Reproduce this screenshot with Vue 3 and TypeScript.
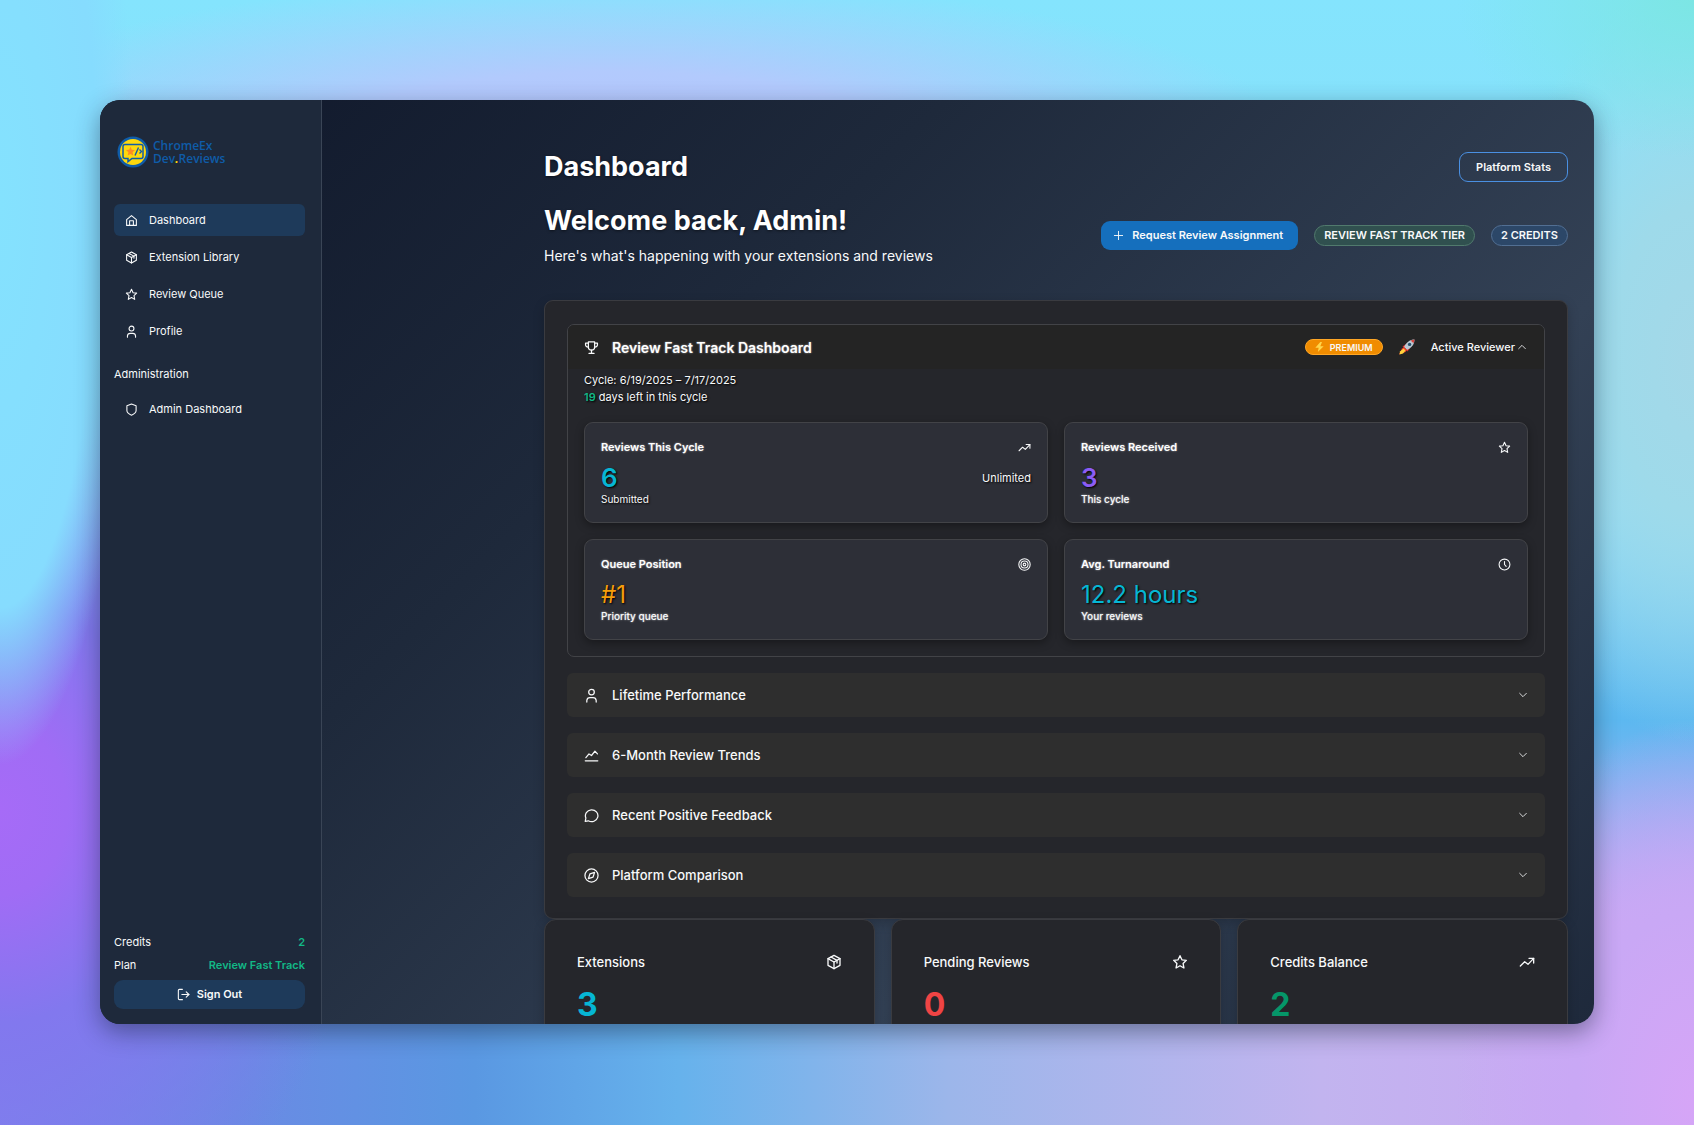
<script setup lang="ts">
import { h, ref, type FunctionalComponent } from 'vue'

type IconName =
  | 'home' | 'package' | 'star' | 'user' | 'shield' | 'logout' | 'plus' | 'trophy'
  | 'trend' | 'target' | 'clock' | 'chart' | 'message' | 'compass' | 'down' | 'up'

const shapes: Record<IconName, string[]> = {
  home: ['M3 10.500L12 3l9 7.500V21H3z', 'M8.500 21v-8.500h7V21'],
  package: ['M12 2l9 5v10l-9 5-9-5V7z', 'M3 7l9 5 9-5', 'M12 12v10', 'M7.500 4.500l9 5v4'],
  star: ['M12 2.500l2.900 6.200 6.600.8-4.900 4.700 1.300 6.800-5.900-3.400L6.100 21l1.300-6.800-4.900-4.700 6.600-.8z'],
  user: ['M12 2a4.500 4.500 0 1 0 0 9 4.500 4.500 0 0 0 0-9z', 'M4.500 22.500v-2.500a5 5 0 0 1 5-4.500h5a5 5 0 0 1 5 4.500v2.500'],
  shield: ['M12 2l8.500 3v9c0 4-3.500 6.500-8.500 8.500C7 20.500 3.500 18 3.500 14V5z'],
  logout: ['M10 2.500H4.500a2 2 0 0 0-2 2v15a2 2 0 0 0 2 2H10', 'M9 12h13', 'M17 7l5 5-5 5'],
  plus: ['M12 3v18', 'M3 12h18'],
  trophy: ['M7 3h10v8a5 5 0 0 1-10 0z', 'M12 16v5', 'M8 21.500h8', 'M7 5H2.500v2.500a4 4 0 0 0 4.500 4', 'M17 5h4.500v2.500a4 4 0 0 1-4.500 4'],
  trend: ['M2 18l6.500-6.500 5 4L22 6.500', 'M15 6.500h7v7'],
  target: ['M12 1.500a10.500 10.500 0 1 0 0 21 10.500 10.500 0 0 0 0-21z', 'M12 5.500a6.500 6.500 0 1 0 0 13 6.500 6.500 0 0 0 0-13z', 'M12 9.500a2.500 2.500 0 1 0 0 5 2.500 2.500 0 0 0 0-5z'],
  clock: ['M12 2a10 10 0 1 0 0 20 10 10 0 0 0 0-20z', 'M12 6.500V12l3 3.500'],
  chart: ['M2 20.500h20', 'M3 15.500l5-6 4 2.500 5.500-7 4 4.500'],
  message: ['M2 21.500l1-5.500a10 9.500 0 1 1 4 4.500z'],
  compass: ['M12 1.500a10.500 10.500 0 1 0 0 21 10.500 10.500 0 0 0 0-21z', 'M17 7l-2.500 7.500L7 17l2.500-7.500z'],
  down: ['M4 8l8 8 8-8'],
  up: ['M4 16l8-8 8 8'],
}

const Icon: FunctionalComponent<{ name: IconName; size: number }> = (props) =>
  h(
    'svg',
    {
      width: props.size,
      height: props.size,
      viewBox: '0 0 24 24',
      fill: 'none',
      stroke: 'currentColor',
      'stroke-width': 2,
      'stroke-linejoin': 'round',
      'stroke-linecap': 'round',
      'aria-hidden': 'true',
      style: { flex: 'none' },
    },
    shapes[props.name].map((d) => h('path', { d })),
  )
Icon.props = ['name', 'size']

const nav: { label: string; icon: IconName; active?: boolean }[] = [
  { label: 'Dashboard', icon: 'home', active: true },
  { label: 'Extension Library', icon: 'package' },
  { label: 'Review Queue', icon: 'star' },
  { label: 'Profile', icon: 'user' },
]

const metrics: {
  title: string; icon: IconName; value: string; tone: string; note: string
  bold?: boolean; side?: string; plain?: boolean
}[] = [
  { title: 'Reviews This Cycle', icon: 'trend', value: '6', tone: 'cyan', note: 'Submitted', bold: true, side: 'Unlimited', plain: true },
  { title: 'Reviews Received', icon: 'star', value: '3', tone: 'violet', note: 'This cycle', bold: true },
  { title: 'Queue Position', icon: 'target', value: '#1', tone: 'amber', note: 'Priority queue' },
  { title: 'Avg. Turnaround', icon: 'clock', value: '12.2 hours', tone: 'cyan', note: 'Your reviews' },
]

const sections: { label: string; icon: IconName }[] = [
  { label: 'Lifetime Performance', icon: 'user' },
  { label: '6-Month Review Trends', icon: 'chart' },
  { label: 'Recent Positive Feedback', icon: 'message' },
  { label: 'Platform Comparison', icon: 'compass' },
]

const totals: { label: string; icon: IconName; value: string; tone: string }[] = [
  { label: 'Extensions', icon: 'package', value: '3', tone: 'cyan' },
  { label: 'Pending Reviews', icon: 'star', value: '0', tone: 'red' },
  { label: 'Credits Balance', icon: 'trend', value: '2', tone: 'green' },
]

const open = ref(true)
</script>

<template>
  <div class="desktop">
    <div class="window">
      <aside class="sidebar">
        <a class="logo" href="#">
          <svg width="32" height="32" viewBox="0 0 32 32" aria-hidden="true">
            <circle cx="16" cy="16" r="15.500" fill="#0f5ca8" />
            <circle cx="16" cy="16" r="13" fill="#fdd80d" />
            <path d="M8 8.500h16a2 2 0 0 1 2 2v10a2 2 0 0 1-2 2H15l-4 3.200v-3.200H8a2 2 0 0 1-2-2v-10a2 2 0 0 1 2-2z" fill="none" stroke="#0f5ca8" stroke-width="1.500" />
            <path d="M13.500 10.800l1.300 3 3.200.3-2.400 2.200.7 3.300-2.800-1.700-2.800 1.700.7-3.300L9 14.100l3.200-.3z" fill="#ff8a24" />
            <path d="M21.500 11.500l-3.500 8M22.500 13.500l2 2-2 2" fill="none" stroke="#0f5ca8" stroke-width="1.400" />
          </svg>
          <span class="brand">ChromeEx<br />Dev<i>.</i>Reviews</span>
        </a>
        <nav class="nav">
          <a v-for="item in nav" :key="item.label" href="#" class="nav-item" :class="{ active: item.active }">
            <Icon :name="item.icon" :size="13" />{{ item.label }}
          </a>
          <h2 class="nav-heading">Administration</h2>
          <a href="#" class="nav-item"><Icon name="shield" :size="13" />Admin Dashboard</a>
        </nav>
        <div class="account">
          <p><span>Credits</span><b>2</b></p>
          <p><span>Plan</span><b>Review Fast Track</b></p>
          <button type="button" class="sign-out"><Icon name="logout" :size="13" />Sign Out</button>
        </div>
      </aside>

      <main class="main">
        <header class="bar">
          <h1>Dashboard</h1>
          <button type="button" class="outline">Platform Stats</button>
        </header>
        <div class="welcome">
          <div>
            <h1>Welcome back, Admin!</h1>
            <p>Here's what's happening with your extensions and reviews</p>
          </div>
          <div class="actions">
            <button type="button" class="primary"><Icon name="plus" :size="11" />Request Review Assignment</button>
            <span class="badge tier">REVIEW FAST TRACK TIER</span>
            <span class="badge credits">2 CREDITS</span>
          </div>
        </div>

        <section class="panel">
          <div class="track">
            <button type="button" class="track-head" :aria-expanded="open" @click="open = !open">
              <Icon name="trophy" :size="15" />
              <span class="track-title">Review Fast Track Dashboard</span>
              <span class="premium">
                <svg width="9" height="10" viewBox="0 0 10 12" aria-hidden="true"><path d="M6 0L0 7h4L3 12l7-7H6l2-5z" fill="#ffd54a" /></svg>
                PREMIUM
              </span>
              <svg class="rocket" width="16" height="16" viewBox="0 0 16 16" aria-hidden="true">
                <path d="M3.500 7.500L7 5l3.500-.5L6 9.500z" fill="#e0312d" />
                <path d="M8.500 12.500L11 9l.5-3.500-5 4.500z" fill="#e0312d" />
                <path d="M15.500.5C11 .5 7.500 3 5 8l3 3c5-2.500 7.500-6 7.500-10.500z" fill="#b9c7d2" />
                <path d="M15.500.5l-3.800 1L14.500 4.300z" fill="#d8403a" />
                <circle cx="10.600" cy="5.400" r="1.700" fill="#27516d" />
                <path d="M5 8L3 9.500 0 15.500 6.500 13 8 11z" fill="#ee3a2c" />
                <path d="M4.500 9.500L1 12.500.5 15.500 4 14.500l2.500-3z" fill="#ffd13b" />
              </svg>
              <span class="status">Active Reviewer</span>
              <Icon :name="open ? 'up' : 'down'" :size="10" />
            </button>
            <div v-if="open" class="track-body">
              <p class="cycle">Cycle: 6/19/2025 – 7/17/2025<br /><b>19</b> days left in this cycle</p>
              <div class="metrics">
                <article v-for="m in metrics" :key="m.title" class="metric">
                  <div class="row"><h3>{{ m.title }}</h3><Icon :name="m.icon" :size="13" /></div>
                  <div class="row figure">
                    <span class="value" :class="[m.tone, { bold: m.bold }]">{{ m.value }}</span>
                    <span v-if="m.side" class="side">{{ m.side }}</span>
                  </div>
                  <p :class="{ plain: m.plain }">{{ m.note }}</p>
                </article>
              </div>
            </div>
          </div>
          <button v-for="s in sections" :key="s.label" type="button" class="section" aria-expanded="false">
            <Icon :name="s.icon" :size="15" />
            <span>{{ s.label }}</span>
            <Icon name="down" :size="10" />
          </button>
        </section>

        <div class="totals">
          <article v-for="t in totals" :key="t.label" class="total">
            <div class="row"><h3>{{ t.label }}</h3><Icon :name="t.icon" :size="16" /></div>
            <strong :class="t.tone">{{ t.value }}</strong>
          </article>
        </div>
      </main>
    </div>
  </div>
</template>

<style>
body {
  margin: 0;
}
</style>

<style scoped>
* {
  box-sizing: border-box;
}
h1, h2, h3, p {
  margin: 0;
}
a {
  color: inherit;
  text-decoration: none;
}
button {
  font: inherit;
  color: inherit;
  border: 0;
  cursor: pointer;
}
.desktop {
  height: 100vh;
  padding: 100px 100px 101px;
  overflow: hidden;
  color: #f8f9fa;
  font: 11px/17px Inter, "Liberation Sans", sans-serif;
  background:
    radial-gradient(ellipse 8% 50% at 0% 18%, #84e2fe 0%, #86dcfe 72%, transparent 100%),
    radial-gradient(ellipse 22% 42% at 0% 72%, #a66bf7 0%, #a06cf5 18%, #8278ee 45%, transparent 100%),
    radial-gradient(ellipse 40% 14% at 36% 12%, #b6c4fc 0%, #b2cafd 40%, transparent 100%),
    radial-gradient(ellipse 14% 14% at 100% 0%, #7ce6e4 0%, transparent 100%),
    radial-gradient(ellipse 12% 34% at 100% 32%, #a4d8e8 0%, #9edaea 40%, transparent 100%),
    radial-gradient(ellipse 14% 34% at 100% 98%, #d6a5f7 0%, #c9a8f5 50%, transparent 100%),
    linear-gradient(180deg, #84e4fd 0%, #8edcf8 45%, #5cb8f0 64%, transparent 82%),
    linear-gradient(90deg, #7b84ec 0%, #6a8ae4 14%, #5a98e2 28%, #66b2ec 40%, #9cb6ea 56%, #c2b4ef 78%, #cba6f4 100%);
}
.window {
  display: flex;
  height: 100%;
  overflow: hidden;
  border-radius: 20px;
  background: linear-gradient(135deg, #0f172a 0%, #1e293b 35%, #334155 70%, #1e293b 100%);
  box-shadow: 0 8px 24px rgba(20, 30, 50, 0.45);
}

.sidebar {
  display: flex;
  flex: none;
  flex-direction: column;
  width: 222px;
  padding: 36px 16px 15px 14px;
  border-right: 1px solid #3a4556;
  background: #1e293b;
}
.logo {
  display: flex;
  align-items: center;
  gap: 4px;
  padding-left: 3px;
}
.brand {
  color: #0f5ca8;
  font: 600 12px/13px "Open Sans", sans-serif;
}
.brand i {
  color: #fdd80d;
  font-weight: 700;
}
.nav {
  display: flex;
  flex-direction: column;
  gap: 5px;
  margin-top: 36px;
}
.nav-item {
  display: flex;
  align-items: center;
  gap: 11px;
  height: 32px;
  padding-left: 11px;
  border-radius: 6px;
}
.nav-item.active {
  background: #1e3a5a;
}
.nav-heading {
  margin: 14px 0 5px;
  font-size: 11px;
  font-weight: 400;
}
.account {
  margin-top: auto;
}
.account p {
  display: flex;
  justify-content: space-between;
  margin-bottom: 6px;
}
.account b {
  color: #12b886;
  font-weight: 600;
}
.sign-out {
  display: flex;
  align-items: center;
  justify-content: center;
  gap: 7px;
  width: 100%;
  height: 29px;
  border-radius: 9px;
  background: #1e3a5a;
  font-weight: 600;
}

.main {
  flex: 1;
  min-width: 0;
  padding: 50px 26px 0 222px;
}
h1 {
  color: #fff;
  font-size: 27px;
  font-weight: 700;
  line-height: 34px;
  text-shadow: 0 1px 3px rgba(0, 0, 0, 0.5);
}
.bar,
.welcome,
.actions,
.row {
  display: flex;
  align-items: center;
  justify-content: space-between;
}
.outline {
  height: 30px;
  padding: 0 16px;
  border: 1px solid #4a90e2;
  border-radius: 9px;
  background: transparent;
  font-weight: 600;
}
.welcome {
  margin-top: 20px;
  margin-bottom: 34px;
}
.welcome p {
  margin-top: 8px;
  font-size: 14px;
  line-height: 20px;
}
.actions {
  gap: 16px;
}
.primary {
  display: flex;
  align-items: center;
  gap: 8px;
  height: 29px;
  padding: 0 15px 0 12px;
  border-radius: 9px;
  background: #156fbd;
  font-weight: 600;
}
.badge {
  height: 21px;
  padding: 0 9px;
  border: 1px solid;
  border-radius: 11px;
  font-weight: 600;
  line-height: 19px;
}
.tier {
  border-color: #517a6d;
  background: #30504f;
}
.credits {
  border-color: #526f93;
  background: #2c4768;
}

.panel {
  display: flex;
  flex-direction: column;
  gap: 16px;
  padding: 23px 22px 21px;
  border: 1px solid #3a3b40;
  border-radius: 9px;
  background: #25262b;
  box-shadow: 0 4px 12px rgba(0, 0, 0, 0.2);
}
.track {
  overflow: hidden;
  border: 1px solid #424347;
  border-radius: 7px;
}
.track-head {
  display: flex;
  align-items: center;
  width: 100%;
  height: 44px;
  padding: 0 17px 0 16px;
  background: #242424;
  text-align: left;
}
.track-title {
  flex: 1;
  margin-left: 13px;
  color: #fff;
  font-size: 14px;
  font-weight: 600;
  text-shadow: 0 0 2px rgba(255, 255, 255, 0.6);
}
.premium {
  display: flex;
  align-items: center;
  gap: 6px;
  height: 16px;
  padding: 0 9px;
  border: 1px solid #ffa726;
  border-radius: 8px;
  background: #f08c00;
  font-size: 9px;
  font-weight: 600;
}
.rocket {
  margin: 0 16px;
}
.status {
  margin-right: 2px;
  font-weight: 500;
}
.track-body {
  padding: 3px 16px 16px;
}
.cycle {
  text-shadow: 1px 1px 2px #000;
}
.cycle b {
  color: #12b886;
  font-weight: 600;
}
.metrics {
  display: grid;
  grid-template-columns: 1fr 1fr;
  gap: 16px;
  margin-top: 16px;
}
.metric {
  height: 101px;
  padding: 16px 16px 0;
  border: 1px solid #424347;
  border-radius: 9px;
  background: #2d2f37;
  box-shadow: 0 3px 8px rgba(0, 0, 0, 0.35);
}
.metric h3 {
  color: #fff;
  font-size: 11px;
  font-weight: 600;
  text-shadow: 0 0 2px rgba(255, 255, 255, 0.6);
}
.figure {
  height: 28px;
  margin-top: 8px;
}
.value {
  font-size: 24px;
  line-height: 28px;
  text-shadow: 1px 1px 2px #000;
}
.bold {
  font-size: 26px;
  font-weight: 600;
}
.side {
  text-shadow: 1px 1px 2px #000;
}
.metric p {
  font-size: 10px;
  font-weight: 500;
  line-height: 15px;
  text-shadow: 0 0 2px rgba(255, 255, 255, 0.7);
}
.metric .plain {
  font-weight: 400;
  text-shadow: 1px 1px 2px #000;
}
.section {
  display: flex;
  align-items: center;
  gap: 13px;
  height: 44px;
  padding: 0 17px;
  border-radius: 6px;
  background: #2e2e2e;
  font-size: 13px;
  font-weight: 500;
  text-align: left;
}
.section span {
  flex: 1;
}

.totals {
  display: grid;
  grid-template-columns: repeat(3, 1fr);
  gap: 16px;
}
.total {
  height: 150px;
  padding: 32px 32px 0;
  border: 1px solid #3a3b40;
  border-radius: 12px;
  background: #25262b;
  box-shadow: 0 4px 12px rgba(0, 0, 0, 0.2);
}
.total h3 {
  font-size: 13px;
  font-weight: 500;
  line-height: 20px;
}
.total strong {
  display: block;
  margin-top: 13px;
  font-size: 32px;
  font-weight: 700;
  line-height: 40px;
}
.cyan { color: #06b6d4; }
.violet { color: #8b5cf6; }
.amber { color: #f59e0b; }
.red { color: #ef4444; }
.green { color: #059669; }
</style>
